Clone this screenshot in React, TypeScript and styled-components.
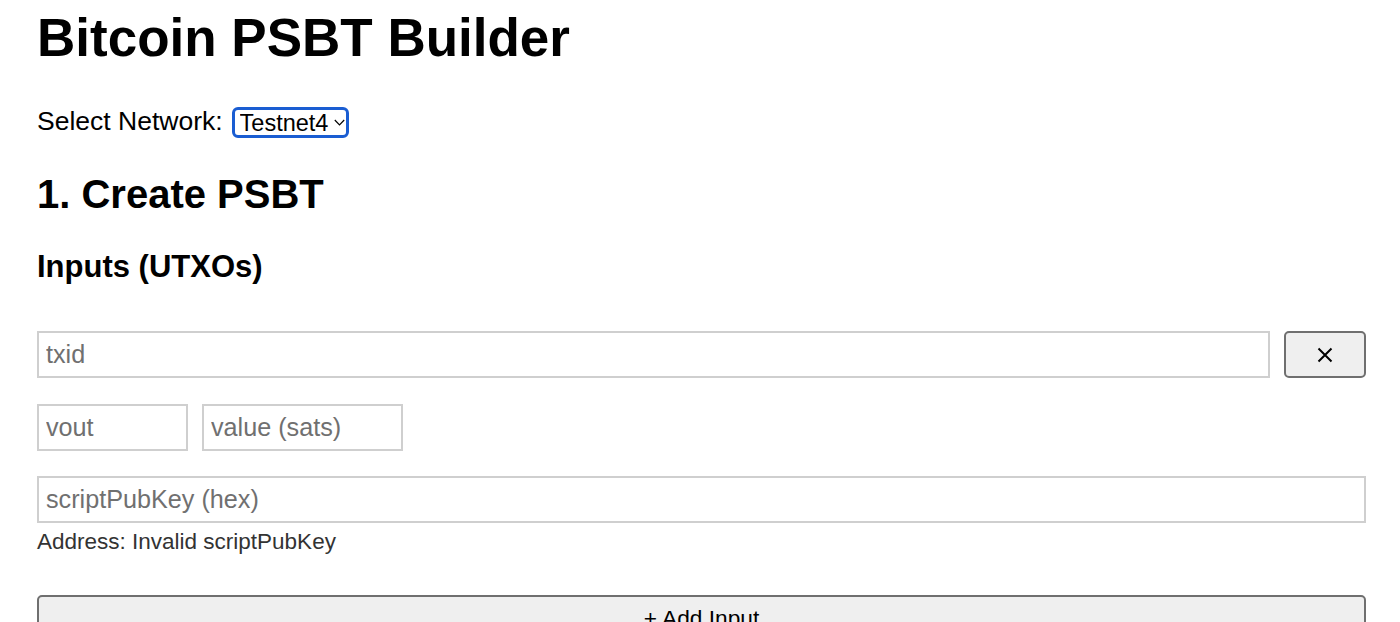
import React from "react";
import styled, { createGlobalStyle } from "styled-components";

const GlobalStyle = createGlobalStyle`
  html, body { margin: 0; padding: 0; background: #ffffff; }
  body { font-family: "Liberation Sans", Arial, Helvetica, sans-serif; color: #000; }
  * { box-sizing: border-box; }
`;

const Page = styled.div`
  padding: 6px 34px 0 37px;
  display: flex;
  flex-direction: column;
`;

const Title = styled.h1`
  margin: 0;
  font-size: 53px;
  line-height: 64px;
  font-weight: 700;
`;

const NetworkRow = styled.div`
  margin-top: 37px;
  height: 31px;
  display: flex;
  align-items: center;
  gap: 9px;
`;

const Label = styled.label`
  font-size: 26.5px;
  line-height: 27px;
  margin-bottom: 3px;
`;

const SelectWrap = styled.div`
  position: relative;
  width: 117px;
  height: 31px;
`;

const Select = styled.select`
  appearance: none;
  -webkit-appearance: none;
  width: 100%;
  height: 100%;
  border: 3px solid #1a5dd2;
  border-radius: 6px;
  background: #fff;
  padding: 0 0 0 5px;
  font-family: "Liberation Sans", Arial, Helvetica, sans-serif;
  font-size: 23.5px;
  color: #000;
  outline: none;
`;

const Chevron = styled.svg`
  position: absolute;
  right: 4px;
  top: 12px;
  pointer-events: none;
`;

const SectionTitle = styled.h2`
  margin: 33px 0 0;
  font-size: 40px;
  line-height: 46px;
  font-weight: 700;
`;

const SubTitle = styled.h3`
  margin: 32px 0 0;
  font-size: 31px;
  line-height: 36px;
  font-weight: 700;
`;

const InputList = styled.div`
  margin-top: 46px;
  display: flex;
  flex-direction: column;
`;

const Row = styled.div<{ $gap?: number }>`
  display: flex;
  gap: 14px;
  margin-top: ${(p) => p.$gap ?? 0}px;
`;

const Field = styled.input<{ $width?: number }>`
  height: 47px;
  ${(p) => (p.$width ? `width: ${p.$width}px; flex: none;` : "flex: 1; min-width: 0;")}
  border: 2px solid #cfcfcf;
  padding: 0 7px;
  font-family: "Liberation Sans", Arial, Helvetica, sans-serif;
  font-size: 25.2px;
  color: #000;
  background: #fff;
  outline: none;
  &::placeholder { color: #707070; }
`;

const Button = styled.button<{ $full?: boolean }>`
  height: 47px;
  ${(p) => (p.$full ? "width: 100%;" : "width: 82px; flex: none;")}
  border: 2px solid #6f6f6f;
  border-radius: 5px;
  background: #efefef;
  font-family: "Liberation Sans", Arial, Helvetica, sans-serif;
  font-size: 22.7px;
  color: #000;
  display: flex;
  align-items: center;
  justify-content: center;
  padding: 0;
  cursor: pointer;
`;

const AddButton = styled(Button)`
  margin-top: 40px;
  align-items: flex-start;
  padding-top: 8px;
  line-height: 26px;
`;

const AddressNote = styled.div`
  margin-top: 6px;
  font-size: 22.5px;
  line-height: 26px;
  color: #333;
`;

export default function App() {
  return (
    <>
      <GlobalStyle />
      <Page>
        <Title>Bitcoin PSBT Builder</Title>
        <NetworkRow>
          <Label htmlFor="network">Select Network:</Label>
          <SelectWrap>
            <Select id="network" defaultValue="testnet4">
              <option value="mainnet">Mainnet</option>
              <option value="testnet4">Testnet4</option>
              <option value="signet">Signet</option>
            </Select>
            <Chevron width="11" height="7" viewBox="0 0 11 7">
              <path d="M0.8 1 L5.5 5.8 L10.2 1" fill="none" stroke="#000" strokeWidth="1.2" />
            </Chevron>
          </SelectWrap>
        </NetworkRow>
        <SectionTitle>1. Create PSBT</SectionTitle>
        <SubTitle>Inputs (UTXOs)</SubTitle>
        <InputList>
          <Row>
            <Field placeholder="txid" />
            <Button aria-label="Remove input">
              <svg width="16" height="16" viewBox="0 0 16 16">
                <path d="M1.5 1.5 L14.5 14.5 M14.5 1.5 L1.5 14.5" stroke="#000" strokeWidth="2" fill="none" />
              </svg>
            </Button>
          </Row>
          <Row $gap={26}>
            <Field $width={151} placeholder="vout" />
            <Field $width={201} placeholder="value (sats)" />
          </Row>
          <Row $gap={25}>
            <Field placeholder="scriptPubKey (hex)" />
          </Row>
          <AddressNote>Address: Invalid scriptPubKey</AddressNote>
          <AddButton $full>+ Add Input</AddButton>
        </InputList>
      </Page>
    </>
  );
}
